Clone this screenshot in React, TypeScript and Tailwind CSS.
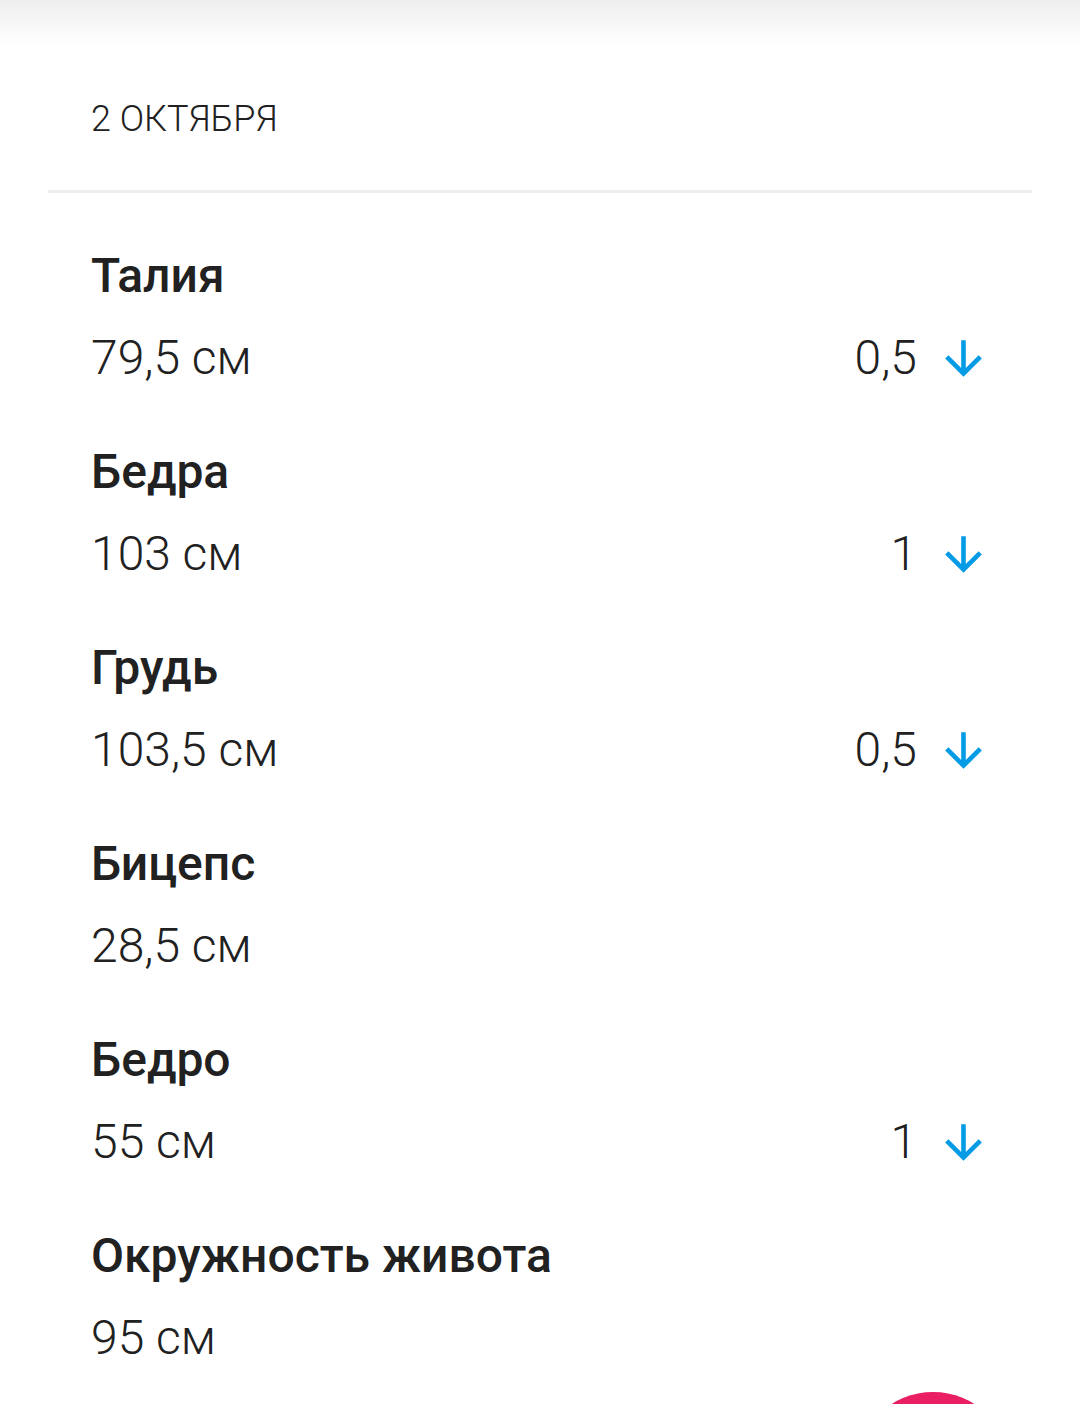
const items: { title: string; value: string; delta?: string }[] = [
  { title: "Талия", value: "79,5 см", delta: "0,5" },
  { title: "Бедра", value: "103 см", delta: "1" },
  { title: "Грудь", value: "103,5 см", delta: "0,5" },
  { title: "Бицепс", value: "28,5 см" },
  { title: "Бедро", value: "55 см", delta: "1" },
  { title: "Окружность живота", value: "95 см" },
];

function ArrowDown() {
  return (
    <svg viewBox="0 0 24 24" className="h-[55px] w-[55px] fill-[#039be5]">
      <path d="M20 12l-1.41-1.41L13 16.17V4h-2v12.17l-5.58-5.59L4 12l8 8 8-8z" />
    </svg>
  );
}

export default function App() {
  return (
    <main className="relative h-[1404px] w-[1080px] overflow-hidden bg-white font-['Roboto',sans-serif] text-[#212121]">
      <div className="h-[45px] bg-gradient-to-b from-[#eeeeee] to-white" />

      <div className="px-[91px] pt-[49px] pb-[46px]">
        <p className="text-[36px] font-light leading-[50px]">2 ОКТЯБРЯ</p>
      </div>
      <div className="mx-[48px] h-[3px] bg-[#eeeeee]" />

      <ul className="pt-[53px]">
        {items.map((item) => (
          <li key={item.title} className="pr-[89px] pl-[91px] pb-[54px]">
            <h2 className="text-[48px] font-medium leading-[60px]">{item.title}</h2>
            <div className="mt-[22px] flex h-[60px] items-center justify-between">
              <span className="text-[48px] font-light leading-[60px]">{item.value}</span>
              {item.delta && (
                <span className="flex items-center gap-[19px]">
                  <span className="text-[48px] font-light leading-[60px]">{item.delta}</span>
                  <ArrowDown />
                </span>
              )}
            </div>
          </li>
        ))}
      </ul>

      <button className="absolute top-[1392px] left-[856px] h-[154px] w-[154px] rounded-full bg-[#e91e63] shadow-md" />
    </main>
  );
}
